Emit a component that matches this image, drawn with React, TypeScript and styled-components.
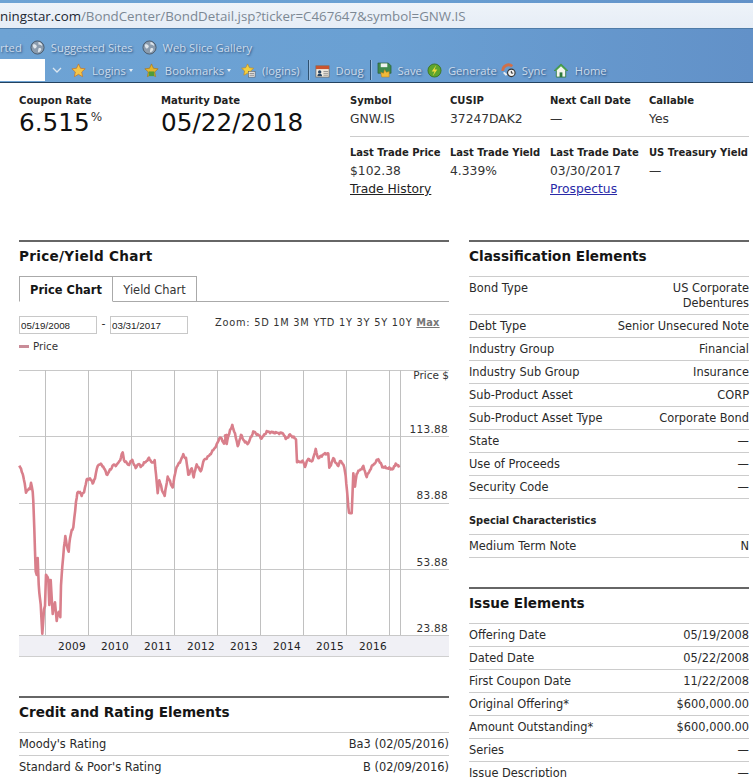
import React from "react";
import styled, { createGlobalStyle } from "styled-components";

const Global = createGlobalStyle`
  html, body { margin: 0; padding: 0; background: #fff; height: 777px; overflow: hidden; }
  body { font-family: "DejaVu Sans", Verdana, sans-serif; color: #222; }
`;

const Chrome = styled.header`
  height: 83px; box-sizing: border-box;
  background: linear-gradient(90deg, #6ea3d4 0%, #6aa0d3 50%, #6291c8 100%);
  border-bottom: 1px solid #24425f;
  padding-top: 3px;
  font-family: "Open Sans", "Noto Sans", sans-serif;
`;
const AddressBar = styled.div`
  height: 26px; box-sizing: border-box;
  background: linear-gradient(180deg, #eef3f9, #e6edf6);
  border-bottom: 1px solid #4f7ca8;
  font-size: 13.3px; line-height: 27px; color: #7c8894;
  white-space: nowrap; overflow: hidden;
`;
const Host = styled.span`color: #1d2833;`;
const BarRow = styled.div<{ $top: number }>`
  display: flex; align-items: center; white-space: nowrap;
  margin-top: ${p => p.$top}px; height: 22px;
  font-size: 11.25px; color: #cddcec;
  text-shadow: 1px 1px 2px rgba(25,55,95,.75);
`;
const Crumb = styled.span<{ $icon?: number; $after?: number }>`
  display: inline-flex; align-items: center;
  margin-left: ${p => p.$icon ?? 0}px;
  margin-right: ${p => p.$after ?? 0}px;
  svg { margin-right: 6px; flex: none; }
`;
const SearchBox = styled.div`width: 45px; height: 22px; background: #fff;`;
const Chevron = styled.svg`margin-left: 7px; flex: none;`;
const Sep = styled.span`width: 1px; height: 20px; background: #2f5170; margin: 0 6px 0 6px; box-shadow: 1px 0 0 rgba(255,255,255,.3);`;
const Dot = styled.span`width: 0; height: 0; margin-left: 3px; border: 2px solid transparent; border-top: 3px solid #e4edf5; border-bottom: 0;`;

const Page = styled.main`padding: 0 4px 0 19px;`;
const Summary = styled.section`display: flex; height: 157px; box-sizing: border-box; padding-top: 12px;`;
const Hero = styled.div<{ $w: number }>`width: ${p => p.$w}px; flex: none;`;
const HeroLabel = styled.div`font-size: 10.1px; font-weight: 700; line-height: 12px; color: #222;`;
const HeroValue = styled.div`font-size: 24.7px; line-height: 30px; margin-top: 1px; color: #111;`;
const Percent = styled.sup`font-size: 12px; vertical-align: 10px; line-height: 0; margin-left: 1px; color: #333;`;
const Stats = styled.div`flex: 1; display: flex; flex-direction: column;`;
const StatRow = styled.div<{ $rule?: boolean }>`
  display: grid; grid-template-columns: 100px 100px 99px 100px;
  ${p => p.$rule ? "border-bottom: 1px solid #ccc; padding-bottom: 8px; margin-bottom: 10px;" : ""}
`;
const StatLabel = styled.div`font-size: 10px; font-weight: 700; line-height: 12px; color: #222; white-space: nowrap;`;
const StatValue = styled.div`font-size: 12.3px; line-height: 18px; margin-top: 3px; color: #333;`;
const PlainLink = styled.a`display: block; font-size: 12.3px; line-height: 18px; color: #222; text-decoration: underline;`;
const BlueLink = styled(PlainLink)`color: #2a2aa8;`;

const Columns = styled.div`display: flex; gap: 20px; align-items: flex-start;`;
const Left = styled.div`width: 430px; flex: none;`;
const Right = styled.div`width: 280px; flex: none;`;
const SectionHead = styled.h2<{ $gap?: number; $ls?: number }>`
  margin: ${p => p.$gap ?? 0}px 0 0; border-top: 2px solid #666;
  height: 36px; box-sizing: border-box;
  font-size: 13.6px; line-height: 28px; font-weight: 700; color: #151515;
  letter-spacing: ${p => p.$ls ?? 0}px;
`;
const Tabs = styled.div`display: flex; height: 26px; box-sizing: border-box; border-bottom: 1px solid #aaa;`;
const Tab = styled.div<{ $active?: boolean; $w: number }>`
  width: ${p => p.$w}px; box-sizing: border-box; height: 26px; text-align: center;
  font-size: 11.45px; line-height: 26px; background: #fff; color: ${p => p.$active ? "#151515" : "#333"};
  font-weight: ${p => p.$active ? 700 : 400};
  border: 1px solid #aaa; border-left-width: ${p => p.$active ? 1 : 0}px;
  border-bottom-color: ${p => p.$active ? "#fff" : "#aaa"};
`;
const Controls = styled.div`display: flex; align-items: flex-start; margin-top: 14px; height: 20px;`;
const DateInput = styled.input`
  width: 78px; height: 18px; box-sizing: border-box; border: 1px solid #c8c8c8; padding: 1px 0 0 1px; outline: 0;
  font: 9.8px "Liberation Sans", sans-serif; color: #222; background: #fff;
`;
const Dash = styled.span`width: 13px; text-align: center; font-size: 11px; line-height: 16px;`;
const ZoomBar = styled.div`margin-left: 27px; font-size: 9.8px; letter-spacing: .75px; line-height: 13px; color: #333; white-space: nowrap;`;
const ZoomMax = styled.span`font-weight: 700; color: #777; text-decoration: underline; letter-spacing: .2px;`;
const Legend = styled.div`display: flex; align-items: center; gap: 4px; margin-top: 2px; font-size: 10.3px; line-height: 16px; color: #333;`;
const Swatch = styled.i`width: 10px; height: 3px; background: #c98c98; display: block;`;
const ChartSvg = styled.svg`display: block; margin-top: 16px; overflow: visible;`;

const Table = styled.div`border-top: 1px solid #ccc;`;
const Row = styled.div`
  display: flex; justify-content: space-between; align-items: flex-start; gap: 10px; box-sizing: border-box;
  border-bottom: 1px solid #ccc; padding: 4px 0 3px; font-size: 11.4px; line-height: 15px; color: #2a2a2a; min-height: 23px;
`;
const RowLabel = styled.span`white-space: nowrap;`;
const RowValue = styled.span`text-align: right;`;
const SubHead = styled.h3`margin: 15px 0 0; height: 20px; font-size: 9.9px; line-height: 14px; font-weight: 700; color: #222;`;

const Globe = () => (
  <svg width="15" height="15" viewBox="0 0 16 16"><circle cx="8" cy="8" r="7" fill="#8b9cae" stroke="#48596b" strokeWidth="1"/><path d="M3 5c2-1 3 0 4 1s-1 3-2 3-2-2-2-4zM9 2c2 0 4 2 4 4-2 0-2-2-4-1zM9 9c2-1 3 0 3 1s-2 3-3 3 0-3 0-4z" fill="#dfe6ec"/></svg>
);
const Star = ({ c = "#f2c230", b = "#d47a1c" }: { c?: string; b?: string }) => (
  <svg width="15" height="15" viewBox="0 0 16 16"><path d="M8 1l2.100 4.600 5 .6-3.700 3.400 1 5L8 12.100 3.600 14.600l1-5L.9 6.200l5-.6z" fill={c} stroke={b} strokeWidth=".7"/></svg>
);
const StarGreen = () => (
  <svg width="15" height="15" viewBox="0 0 16 16"><path d="M8 1l2.100 4.600 5 .6-3.700 3.400 1 5L8 12.100 3.600 14.600l1-5L.9 6.200l5-.6z" fill="#e3b52c" stroke="#a8741a" strokeWidth=".7"/><path d="M5 9h6v5H5z" fill="#4f9c3a"/></svg>
);
const StarDoc = () => (
  <svg width="15" height="15" viewBox="0 0 16 16"><path d="M7 1l2 4 4.500.6-3.300 3 .9 4.400L7 10.800 3 13l.9-4.400L.6 5.600 5 5z" fill="#f3d040" stroke="#c48a1c" strokeWidth=".7"/><rect x="8" y="9" width="7" height="6" fill="#f5f5f5" stroke="#555" strokeWidth=".6"/><path d="M9 11h5M9 13h5" stroke="#444" strokeWidth=".7"/></svg>
);
const Calendar = () => (
  <svg width="15" height="15" viewBox="0 0 16 16"><rect x="1" y="3" width="14" height="12" fill="#f1ece2" stroke="#6b5b4b" strokeWidth=".7"/><rect x="1" y="3" width="14" height="3.500" fill="#c9542e"/><circle cx="5" cy="9.500" r="1.800" fill="#26425f"/><path d="M2.500 14c0-2 1-2.500 2.500-2.500s2.500.5 2.500 2.500z" fill="#26425f"/><path d="M9 9h5M9 11h5M9 13h5" stroke="#777" strokeWidth=".8"/></svg>
);
const Floppy = () => (
  <svg width="15" height="16" viewBox="0 0 16 17"><path d="M1 1h11l3 3v8H1z" fill="#3f8a4c" stroke="#24502c" strokeWidth=".6"/><rect x="4" y="1.500" width="7" height="4" fill="#eef2ee"/><path d="M5 16l-1-5 3 1 1-4 2 3 3-1v6z" fill="#f1b93a" stroke="#b87a1a" strokeWidth=".5"/></svg>
);
const Bolt = () => (
  <svg width="15" height="15" viewBox="0 0 16 16"><circle cx="8" cy="8" r="7" fill="#5da52e" stroke="#35691a" strokeWidth=".8"/><path d="M10 2L5 9h3l-2 5 5-7H8z" fill="#f5d93c"/></svg>
);
const SyncIcon = () => (
  <svg width="15" height="16" viewBox="0 0 16 16"><path d="M2 9a6 6 0 0 1 10-5" fill="none" stroke="#d0704a" strokeWidth="3"/><path d="M2 11l3 3 2-1-3-3z" fill="#e8edf2"/><circle cx="11" cy="11" r="4" fill="#f4f4f4" stroke="#333" strokeWidth="1.200"/><path d="M11 9v2.300h2" stroke="#222" strokeWidth="1" fill="none"/></svg>
);
const HomeIcon = () => (
  <svg width="16" height="15" viewBox="0 0 16 16"><path d="M8 1L.8 8h2.200v7h10V8h2.200z" fill="#f3f5ee" stroke="#2f7a3c" strokeWidth=".9"/><path d="M8 1L.8 8h2.400L8 3.400 12.800 8h2.400z" fill="#47a04c"/><rect x="6.500" y="10" width="3" height="5" fill="#2f7a3c"/></svg>
);

const basePts: [number, number][] = [
  [58,302],[68,325],[72,345],[78,380],[90,370],[93,352],[98,380],[100,410],[103,490],[107,620],[110,630],[113,580],[116,660],[122,720],[127,808],[132,730],[135,725],[138,630],[145,640],[148,720],[152,645],[158,745],[165,712],[170,765],[176,740],[181,755],[183,660],[187,605],[192,545],[196,515],[200,540],[206,560],[210,520],[215,495],[220,490],[223,460],[228,410],[232,385],[240,380],[245,392],[252,380],[260,345],[270,340],[278,355],[285,340],[293,300],[305,298],[312,310],[322,330],[330,315],[340,300],[350,300],[358,290],[368,262],[372,285],[385,300],[397,285],[407,310],[415,295],[422,305],[432,295],[447,280],[458,295],[464,285],[468,330],[473,382],[478,345],[486,375],[494,392],[503,335],[510,350],[518,368],[528,310],[540,290],[550,270],[558,280],[565,330],[575,310],[581,335],[590,298],[602,320],[612,285],[625,275],[640,255],[650,240],[660,215],[672,235],[680,210]
];
const rightPts: [number, number][] = [
  [0,210],[5,235],[15,195],[22,183],[30,205],[38,245],[48,210],[60,232],[70,235],[85,200],[100,210],[110,220],[125,200],[150,203],[175,205],[182,222],[195,210],[213,222],[216,290],[235,290],[240,305],[250,280],[260,292],[272,255],[280,280],[295,268],[310,265],[313,310],[325,280],[340,305],[345,285],[358,305],[362,335],[368,400],[372,445],[380,445],[385,325],[390,365],[395,325],[415,305],[425,335],[440,305],[460,282],[472,305],[490,310],[505,312],[512,295],[525,310]
];
const allPts = [
  ...basePts.map(([x, y]) => [x / 3, 365 + y / 3]),
  ...rightPts.map(([x, y]) => [225 + x / 3, 365 + y / 3]),
];
const linePath = (() => {
  const out: string[] = [];
  let k = 0;
  for (let i = 0; i < allPts.length - 1; i++) {
    const [x0, y0] = allPts[i];
    const [x1, y1] = allPts[i + 1];
    const n = Math.max(1, Math.round((x1 - x0) / 0.8));
    for (let j = 0; j < n; j++) {
      const t = j / n;
      const wob = (Math.sin(k * 2.3) + Math.sin(k * 5.1)) * 0.55;
      const y = Math.min(635, y0 + (y1 - y0) * t + wob);
      out.push(`${(x0 + (x1 - x0) * t).toFixed(1)},${y.toFixed(1)}`);
      k++;
    }
  }
  return out.join(" ");
})();

const vLines = [45, 88, 131, 174, 217, 260, 303, 346, 389, 400];
const hLines = [370, 436, 503, 569];
const years = [["2009", 72], ["2010", 115], ["2011", 158], ["2012", 201], ["2013", 244], ["2014", 287], ["2015", 330], ["2016", 373]] as const;
const yLabels = [["113.88", 433], ["83.88", 499], ["53.88", 566], ["23.88", 632]] as const;

const Chart = () => (
  <ChartSvg width="431" height="288" viewBox="19 370 431 288">
    <rect x="19" y="635" width="430" height="21" fill="#f0f0f5" />
    {hLines.map(y => <line key={y} x1="19" x2="449" y1={y + .5} y2={y + .5} stroke="#c8c8c8" />)}
    <line x1="19" x2="449" y1="635.5" y2="635.5" stroke="#c8c8c8" />
    <line x1="19" x2="449" y1="656.5" y2="656.5" stroke="#cfcfcf" />
    {vLines.map(x => <line key={x} x1={x + .5} x2={x + .5} y1="370" y2="635" stroke="#c0c0c0" />)}
    <polyline points={linePath} fill="none" stroke="#d97f8b" strokeWidth="2.600" strokeLinejoin="round" />
    <text x="449" y="379" textAnchor="end" fontSize="10.500" fontFamily="DejaVu Sans" fill="#333">Price $</text>
    {yLabels.map(([t, y]) => <text key={t} x="448" y={y} textAnchor="end" fontSize="10.500" letterSpacing=".3" fontFamily="DejaVu Sans" fill="#333">{t}</text>)}
    {years.map(([t, x]) => <text key={t} x={x} y="650" textAnchor="middle" fontSize="10.500" letterSpacing=".3" fontFamily="DejaVu Sans" fill="#222">{t}</text>)}
  </ChartSvg>
);

const DataRows = ({ rows }: { rows: [string, React.ReactNode][] }) => (
  <Table>
    {rows.map(([k, v]) => (
      <Row key={k}><RowLabel>{k}</RowLabel><RowValue>{v}</RowValue></Row>
    ))}
  </Table>
);

export default function App() {
  return (
    <>
      <Global />
      <Chrome>
        <AddressBar><Host>ningstar.com</Host>/BondCenter/BondDetail.jsp?ticker=C467647&amp;symbol=GNW.IS</AddressBar>
        <BarRow $top={7}>
          <Crumb $after={8}>rted</Crumb>
          <Crumb><Globe />Suggested Sites</Crumb>
          <Crumb $icon={9}><Globe />Web Slice Gallery</Crumb>
        </BarRow>
        <BarRow $top={1}>
          <SearchBox />
          <Chevron width="10" height="6" viewBox="0 0 10 6"><path d="M1 1l4 4 4-4" fill="none" stroke="#dbe6f0" strokeWidth="1.300" /></Chevron>
          <Crumb $icon={9}><Star c="#f4c64a" b="#c8701c" />Logins</Crumb><Dot />
          <Crumb $icon={11}><StarGreen />Bookmarks</Crumb><Dot />
          <Crumb $icon={10} $after={2}><StarDoc />(logins)</Crumb><Sep />
          <Crumb><Calendar />Doug</Crumb><Sep />
          <Crumb><Floppy />Save</Crumb>
          <Crumb $icon={5}><Bolt />Generate</Crumb>
          <Crumb $icon={4}><SyncIcon />Sync</Crumb>
          <Crumb $icon={7}><HomeIcon />Home</Crumb>
        </BarRow>
      </Chrome>
      <Page>
        <Summary>
          <Hero $w={142}>
            <HeroLabel>Coupon Rate</HeroLabel>
            <HeroValue>6.515<Percent>%</Percent></HeroValue>
          </Hero>
          <Hero $w={189}>
            <HeroLabel>Maturity Date</HeroLabel>
            <HeroValue>05/22/2018</HeroValue>
          </Hero>
          <Stats>
            <StatRow $rule>
              <div><StatLabel>Symbol</StatLabel><StatValue>GNW.IS</StatValue></div>
              <div><StatLabel>CUSIP</StatLabel><StatValue>37247DAK2</StatValue></div>
              <div><StatLabel>Next Call Date</StatLabel><StatValue>—</StatValue></div>
              <div><StatLabel>Callable</StatLabel><StatValue>Yes</StatValue></div>
            </StatRow>
            <StatRow>
              <div><StatLabel>Last Trade Price</StatLabel><StatValue>$102.38</StatValue><PlainLink>Trade History</PlainLink></div>
              <div><StatLabel>Last Trade Yield</StatLabel><StatValue>4.339%</StatValue></div>
              <div><StatLabel>Last Trade Date</StatLabel><StatValue>03/30/2017</StatValue><BlueLink>Prospectus</BlueLink></div>
              <div><StatLabel>US Treasury Yield</StatLabel><StatValue>—</StatValue></div>
            </StatRow>
          </Stats>
        </Summary>
        <Columns>
          <Left>
            <SectionHead $ls={.3}>Price/Yield Chart</SectionHead>
            <Tabs>
              <Tab $active $w={94}>Price Chart</Tab>
              <Tab $w={84}>Yield Chart</Tab>
            </Tabs>
            <Controls>
              <DateInput readOnly value="05/19/2008" />
              <Dash>-</Dash>
              <DateInput readOnly value="03/31/2017" />
              <ZoomBar>Zoom: 5D 1M 3M YTD 1Y 3Y 5Y 10Y <ZoomMax>Max</ZoomMax></ZoomBar>
            </Controls>
            <Legend><Swatch />Price</Legend>
            <Chart />
            <SectionHead $gap={38}>Credit and Rating Elements</SectionHead>
            <DataRows rows={[["Moody's Rating", "Ba3 (02/05/2016)"], ["Standard & Poor's Rating", "B (02/09/2016)"]]} />
          </Left>
          <Right>
            <SectionHead>Classification Elements</SectionHead>
            <DataRows rows={[
              ["Bond Type", <>US Corporate<br />Debentures</>],
              ["Debt Type", "Senior Unsecured Note"],
              ["Industry Group", "Financial"],
              ["Industry Sub Group", "Insurance"],
              ["Sub-Product Asset", "CORP"],
              ["Sub-Product Asset Type", "Corporate Bond"],
              ["State", "—"],
              ["Use of Proceeds", "—"],
              ["Security Code", "—"],
            ]} />
            <SubHead>Special Characteristics</SubHead>
            <DataRows rows={[["Medium Term Note", "N"]]} />
            <SectionHead $gap={29}>Issue Elements</SectionHead>
            <DataRows rows={[
              ["Offering Date", "05/19/2008"],
              ["Dated Date", "05/22/2008"],
              ["First Coupon Date", "11/22/2008"],
              ["Original Offering*", "$600,000.00"],
              ["Amount Outstanding*", "$600,000.00"],
              ["Series", "—"],
              ["Issue Description", "—"],
            ]} />
          </Right>
        </Columns>
      </Page>
    </>
  );
}
